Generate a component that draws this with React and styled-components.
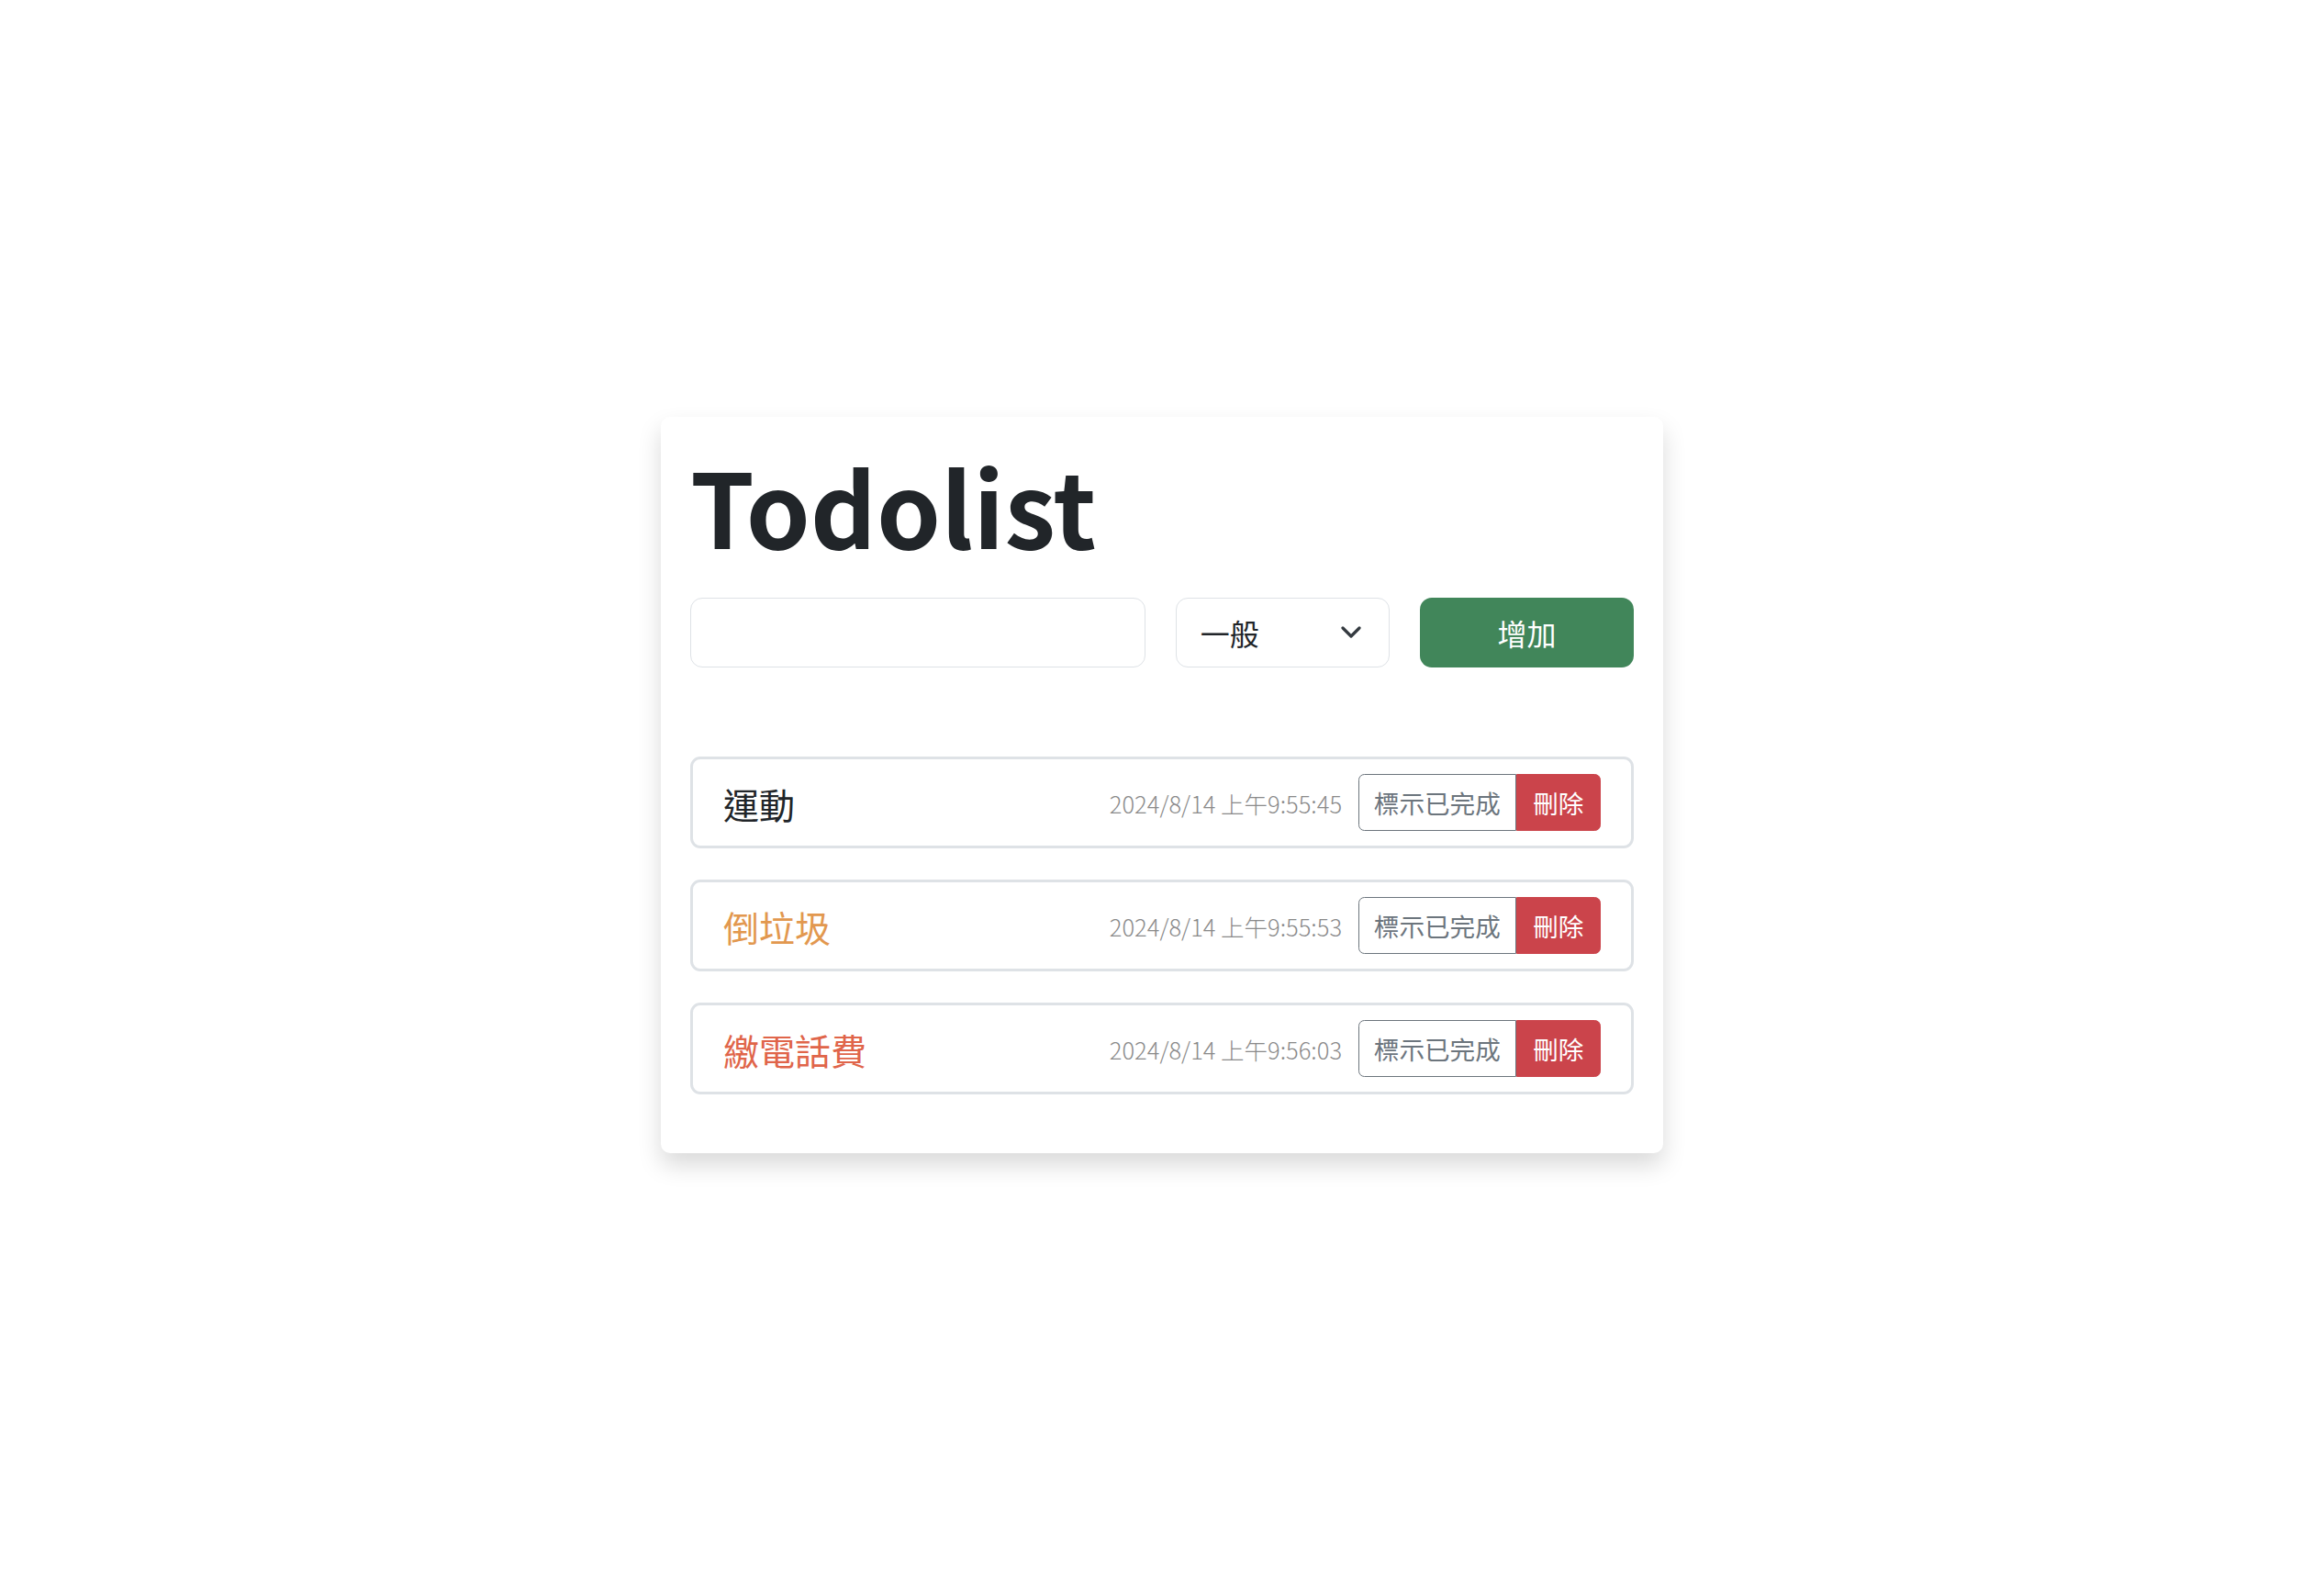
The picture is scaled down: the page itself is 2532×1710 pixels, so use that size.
import React from "react";
import styled, { createGlobalStyle } from "styled-components";

const GlobalStyle = createGlobalStyle`
  * { box-sizing: border-box; }
  html, body { margin: 0; padding: 0; background: #ffffff; }
  body {
    font-family: "Noto Sans CJK TC", "Noto Sans", sans-serif;
    color: #212529;
  }
`;

const Page = styled.main`
  min-height: 100vh;
  display: flex;
  align-items: center;
  justify-content: center;
`;

const Card = styled.section`
  width: 1092px;
  background: #fff;
  border-radius: 10px;
  box-shadow: 0 13px 26px rgba(0, 0, 0, 0.15);
  padding: 22px 32px 64px;
  display: flex;
  flex-direction: column;
`;

const Title = styled.h1`
  margin: 0;
  font-size: 112px;
  line-height: 147px;
  font-weight: 700;
  color: #212529;
  letter-spacing: 0;
`;

const Form = styled.form`
  margin-top: 28px;
  display: grid;
  grid-template-columns: 496px 233px 1fr;
  column-gap: 33px;
  height: 76px;
`;

const TextInput = styled.input`
  height: 76px;
  border: 1.6px solid #dee2e6;
  border-radius: 13px;
  font-family: inherit;
  font-size: 32px;
  padding: 0 26px;
  outline: none;
  background: #fff;
`;

const SelectWrap = styled.div`
  position: relative;
  height: 76px;
`;

const Select = styled.select`
  appearance: none;
  -webkit-appearance: none;
  width: 100%;
  height: 100%;
  border: 1.6px solid #dee2e6;
  border-radius: 13px;
  background: #fff;
  font-family: inherit;
  font-size: 32px;
  color: #212529;
  padding: 0 60px 0 25.8px;
  outline: none;
`;

const Chevron = styled.svg`
  position: absolute;
  right: 31px;
  top: 50%;
  width: 22px;
  height: 14px;
  transform: translateY(-50%);
  pointer-events: none;
`;

const AddButton = styled.button`
  height: 76px;
  border: none;
  border-radius: 13px;
  background: #41865a;
  color: #fff;
  font-family: inherit;
  font-size: 32px;
  cursor: pointer;
`;

const List = styled.ul`
  list-style: none;
  margin: 97px 0 0;
  padding: 0;
  display: flex;
  flex-direction: column;
  gap: 34px;
`;

const Item = styled.li`
  height: 100px;
  border: 3.2px solid #dee2e6;
  border-radius: 11px;
  padding: 0 33px 0 33px;
  display: flex;
  align-items: center;
`;

const ItemText = styled.span`
  flex: 1;
  font-size: 39px;
  color: ${(p) => p.$color};
  padding-top: 2px;
`;

const Stamp = styled.span`
  font-size: 25.5px;
  font-weight: 300;
  color: #8a8a8a;
  margin-right: 18px;
`;

const Group = styled.div`
  display: flex;
  height: 62px;
`;

const GroupButton = styled.button`
  height: 62px;
  font-family: inherit;
  font-size: 27.6px;
  padding: 0 ${(p) => (p.$danger ? "17.6px" : "15.8px")};
  border: 1.6px solid ${(p) => (p.$danger ? "#cb444b" : "#6c757d")};
  background: ${(p) => (p.$danger ? "#cb444b" : "#fff")};
  color: ${(p) => (p.$danger ? "#fff" : "#6c757d")};
  border-radius: ${(p) => (p.$danger ? "0 6.5px 6.5px 0" : "6.5px 0 0 6.5px")};
  cursor: pointer;
`;

const todos = [
  { text: "運動", time: "2024/8/14 上午9:55:45", color: "#212529" },
  { text: "倒垃圾", time: "2024/8/14 上午9:55:53", color: "#e2984f" },
  { text: "繳電話費", time: "2024/8/14 上午9:56:03", color: "#e0654a" },
];

export default function App() {
  return (
    <>
      <GlobalStyle />
      <Page>
        <Card>
          <Title>Todolist</Title>
          <Form onSubmit={(e) => e.preventDefault()}>
            <TextInput type="text" />
            <SelectWrap>
              <Select defaultValue="一般">
                <option>一般</option>
                <option>重要</option>
                <option>緊急</option>
              </Select>
              <Chevron viewBox="0 0 22 14" fill="none">
                <polyline
                  points="2,2 11,11 20,2"
                  stroke="#343a40"
                  strokeWidth="3.2"
                  strokeLinecap="round"
                  strokeLinejoin="round"
                />
              </Chevron>
            </SelectWrap>
            <AddButton type="submit">增加</AddButton>
          </Form>
          <List>
            {todos.map((t) => (
              <Item key={t.time}>
                <ItemText $color={t.color}>{t.text}</ItemText>
                <Stamp>{t.time}</Stamp>
                <Group>
                  <GroupButton type="button">標示已完成</GroupButton>
                  <GroupButton type="button" $danger>
                    刪除
                  </GroupButton>
                </Group>
              </Item>
            ))}
          </List>
        </Card>
      </Page>
    </>
  );
}
